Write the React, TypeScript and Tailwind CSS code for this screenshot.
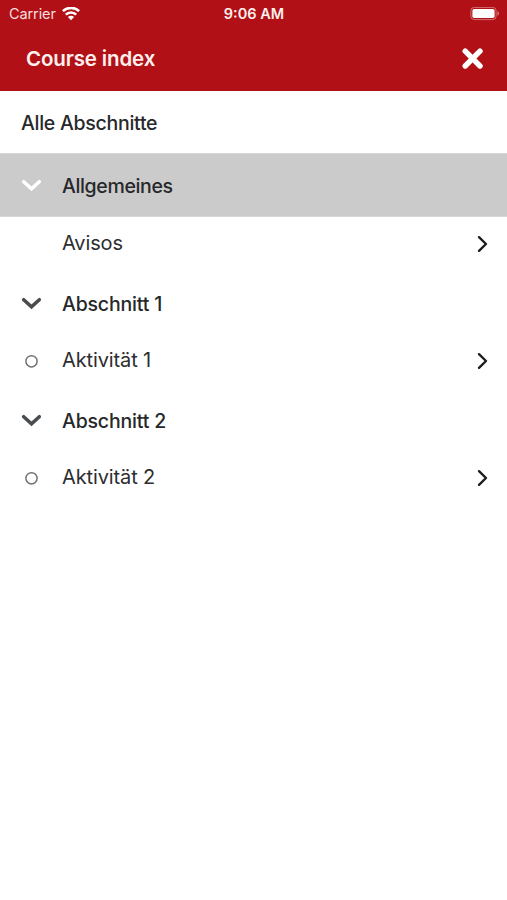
import type { ReactNode } from "react";

function WifiIcon() {
  return (
    <svg width="18" height="14" viewBox="0 0 18 14" fill="none" stroke="#fff" strokeWidth="2.6">
      <path d="M0.9 4.2A11.5 11.5 0 0 1 17.1 4.2" />
      <path d="M3.8 7.6A7.4 7.4 0 0 1 14.2 7.6" />
      <path d="M9 13.2L5.9 10.1A4.4 4.4 0 0 1 12.1 10.1Z" fill="#fff" stroke="none" />
    </svg>
  );
}

function BatteryIcon() {
  return (
    <svg width="30" height="14" viewBox="0 0 30 14" fill="none">
      <rect x="0.9" y="0.4" width="25.2" height="12.2" rx="3.4" stroke="#fff" strokeOpacity="0.4" />
      <rect x="2.4" y="1.9" width="22.2" height="9.2" rx="1.8" fill="#fff" />
      <path d="M27.5 4.3C29.4 5 29.4 8 27.5 8.7Z" fill="#fff" fillOpacity="0.5" />
    </svg>
  );
}

function CloseIcon() {
  return (
    <svg width="22" height="22" viewBox="0 0 22 22" fill="none" stroke="#fff" strokeWidth="5.4" strokeLinecap="round">
      <path d="M3.2 3.2L18 18M18 3.2L3.2 18" />
    </svg>
  );
}

function ChevronDown() {
  return (
    <svg width="20" height="13" viewBox="0 0 20 13" fill="none" stroke="currentColor" strokeWidth="3.5" strokeLinecap="round" strokeLinejoin="miter">
      <path d="M2.7 2.7L10.5 9.9L18.3 2.7" />
    </svg>
  );
}

function ChevronRight() {
  return (
    <svg width="12" height="18" viewBox="0 0 12 18" fill="none" stroke="#1d1d1d" strokeWidth="2.4" strokeLinecap="round" strokeLinejoin="round">
      <path d="M2 2.2L9 9L2 15.8" />
    </svg>
  );
}

function Section({ title, active = false }: { title: string; active?: boolean }) {
  return (
    <div
      className={
        active
          ? "flex h-16 items-center border-y border-[#d6d6d6] bg-[#cbcbcb] pl-[21px] text-white"
          : "flex h-[61px] items-center pb-px pl-[21px] text-[#4a4d50]"
      }
    >
      <ChevronDown />
      <span
        className={
          active
            ? "ml-[21px] pt-px text-[19.5px] leading-6 font-medium tracking-[-0.35px] text-[#262829]"
            : "ml-[21px] pt-px text-[19.5px] leading-6 font-medium tracking-[-0.18px] text-[#262829]"
        }
      >
        {title}
      </span>
    </div>
  );
}

function Activity({ title, marker }: { title: string; marker?: ReactNode }) {
  return (
    <div className="flex h-14 items-center pr-[18px] pb-[2px] pl-[21px]">
      <span className="flex w-5 justify-center">{marker}</span>
      <span className="ml-[21px] flex-1 pb-[2px] text-[20px] leading-6 tracking-[-0.12px] text-[#2c2e30]">{title}</span>
      <ChevronRight />
    </div>
  );
}

function Circle() {
  return (
    <svg width="14" height="14" viewBox="0 0 14 14" fill="none" stroke="#707274" strokeWidth="1.5">
      <circle cx="7.5" cy="7.3" r="5.6" />
    </svg>
  );
}

export default function App() {
  return (
    <div className="h-[900px] w-full overflow-hidden bg-white font-['Inter','Liberation_Sans',sans-serif]">
      <header className="h-[91px] bg-[#b11116] text-white">
        <div className="grid h-[27px] grid-cols-3 items-center pr-[7px] pl-[9px]">
          <div className="flex items-center gap-[6px]">
            <span className="text-[14.5px] leading-5 tracking-[-0.1px] text-[#f8dede]">Carrier</span>
            <WifiIcon />
          </div>
          <span className="pr-px text-center text-[14.5px] leading-5 font-semibold text-[#fff0ee]">9:06 AM</span>
          <div className="flex justify-end">
            <BatteryIcon />
          </div>
        </div>
        <div className="flex h-[63px] items-center justify-between pr-[23px] pl-[26px]">
          <h1 className="text-[20.5px] leading-6 font-semibold tracking-[-0.14px] text-[#fff0ee]">Course index</h1>
          <CloseIcon />
        </div>
      </header>
      <main>
        <div className="flex h-[62px] items-center pt-[2px] pl-[21px] text-[19.5px] leading-6 font-medium tracking-[-0.27px] text-[#262829]">
          Alle Abschnitte
        </div>
        <Section title="Allgemeines" active />
        <Activity title="Avisos" />
        <Section title="Abschnitt 1" />
        <Activity title="Aktivität 1" marker={<Circle />} />
        <Section title="Abschnitt 2" />
        <Activity title="Aktivität 2" marker={<Circle />} />
      </main>
    </div>
  );
}
